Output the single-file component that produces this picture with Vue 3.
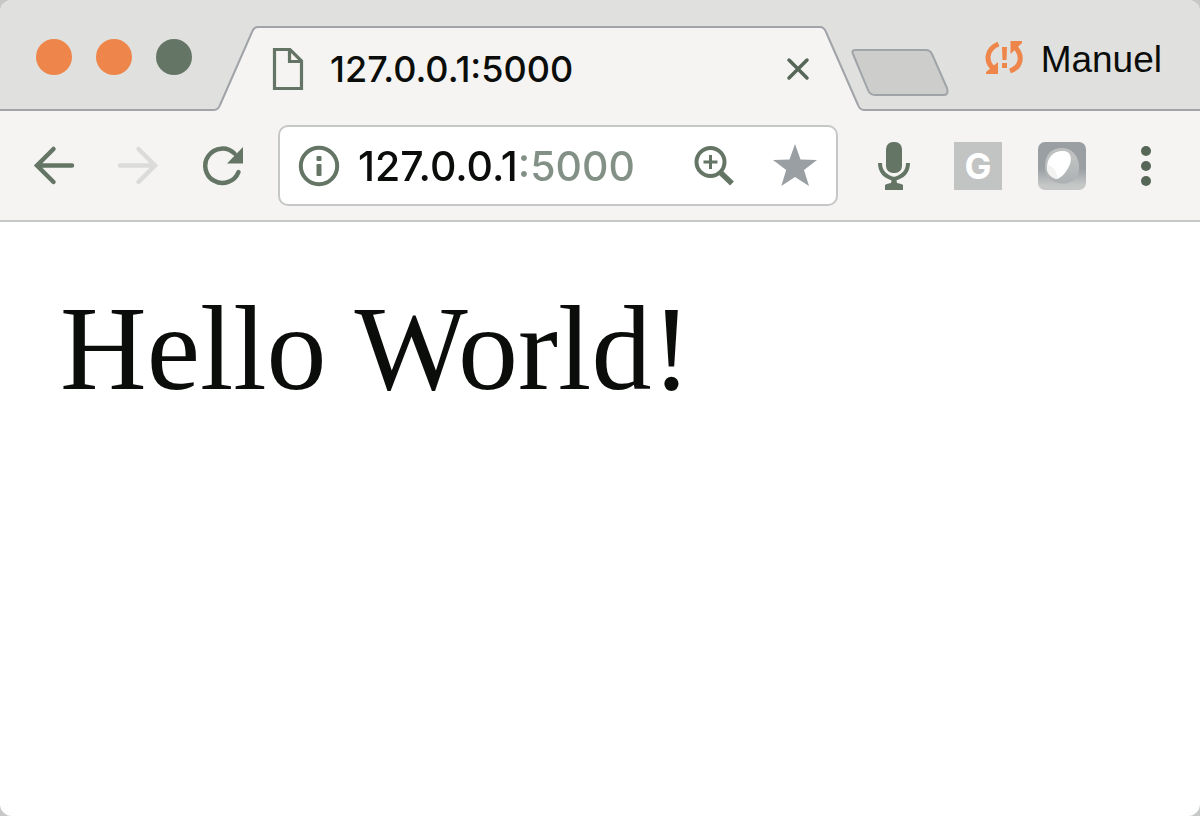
<script setup>
import { ref } from 'vue'

const address = ref('127.0.0.1:5000')
const title = '127.0.0.1:5000'
const profile = 'Manuel'
const lights = [
  { name: 'Close window', tone: 'orange' },
  { name: 'Minimize window', tone: 'orange' },
  { name: 'Zoom window', tone: 'green' },
]
</script>

<template>
  <div class="window">
    <header class="strip">
      <div class="lights">
        <button v-for="l in lights" :key="l.name" :aria-label="l.name" class="light" :class="l.tone"></button>
      </div>

      <div class="tab">
        <svg class="slope" width="44" height="85" viewBox="0 0 44 85" aria-hidden="true">
          <path d="M0 84Q4 84 6 79L38 6Q40 1 44 1V85H0Z" fill="#f5f4f2" />
          <path d="M0 84Q4 84 6 79L38 6Q40 1 44 1" fill="none" stroke="#a0a4a8" stroke-width="2" />
        </svg>
        <div class="tab-body">
          <svg class="page-icon" width="32" height="44" viewBox="0 0 32 44" aria-hidden="true">
            <path d="M2.500 2.500H18L29.500 14V41.500H2.500Z" fill="none" stroke="#647565" stroke-width="3.200" />
            <path d="M17.500 3V14.500H29" fill="none" stroke="#647565" stroke-width="3.200" />
          </svg>
          <span class="title">{{ title }}</span>
          <button class="plain close" aria-label="Close tab">
            <svg width="24" height="24" viewBox="0 0 24 24">
              <path d="M3 3L21 21M21 3L3 21" stroke="#566657" stroke-width="3.500" stroke-linecap="round" />
            </svg>
          </button>
        </div>
        <svg class="slope" width="44" height="85" viewBox="0 0 44 85" aria-hidden="true">
          <path d="M0 1Q4 1 6 6L38 79Q40 84 44 84V85H0Z" fill="#f5f4f2" />
          <path d="M0 1Q4 1 6 6L38 79Q40 84 44 84" fill="none" stroke="#a0a4a8" stroke-width="2" />
        </svg>
      </div>

      <button class="plain new-tab" aria-label="New tab">
        <svg width="100" height="50" viewBox="0 0 100 50">
          <path d="M5 2H76Q80 2 82 6L97 40Q99 47 94 47H25Q20 47 18 42L3 6Q1 2 5 2Z" fill="#cdcdcc" stroke="#a0a4a8" stroke-width="2" />
        </svg>
      </button>

      <button class="plain profile">
        <svg width="40" height="44" viewBox="0 0 40 44" aria-hidden="true">
          <g fill="none" stroke="#ee854a" stroke-width="5">
            <path d="M13.500 6C1 11 0 24 9 31" />
            <path d="M25 33C37 29 38 17 30 9" />
          </g>
          <path d="M1 36V34L13 24V36Z" fill="#ee854a" />
          <path d="M25.500 3H37V5L25.500 16Z" fill="#ee854a" />
          <path d="M17 9H22L21.500 22H17.500Z" fill="#ee854a" />
          <rect x="17" y="25" width="5" height="5" fill="#ee854a" />
        </svg>
        <span>{{ profile }}</span>
      </button>
    </header>

    <nav class="toolbar" aria-label="Navigation">
      <div class="tools">
        <button class="plain tool" aria-label="Back">
          <svg width="44" height="44" viewBox="0 0 44 44">
            <path d="M40 21.500H5M21.500 5L5 21.500L21.500 38" fill="none" stroke="#647565" stroke-width="4.500" stroke-linecap="round" />
          </svg>
        </button>
        <button class="plain tool" aria-label="Forward" disabled>
          <svg width="44" height="44" viewBox="0 0 44 44">
            <path d="M4 21.500H39M22.500 5L39 21.500L22.500 38" fill="none" stroke="#dbdbda" stroke-width="4.500" stroke-linecap="round" />
          </svg>
        </button>
        <button class="plain tool" aria-label="Reload">
          <svg width="44" height="44" viewBox="0 0 44 44">
            <path d="M38.500 28A17.200 17.200 0 1 1 34.500 9.500" fill="none" stroke="#647565" stroke-width="4.500" stroke-linecap="round" />
            <path d="M43 3V19.500H27Z" fill="#647565" />
          </svg>
        </button>
      </div>

      <div class="address">
        <button class="plain" aria-label="Site information">
          <svg width="42" height="42" viewBox="0 0 42 42">
            <circle cx="21" cy="21" r="18.200" fill="none" stroke="#647565" stroke-width="4" />
            <rect x="18.500" y="11" width="5" height="5" rx="1" fill="#647565" />
            <rect x="18.500" y="19" width="5" height="12" rx="1" fill="#647565" />
          </svg>
        </button>
        <input v-model="address" class="url" type="text" aria-label="Address" spellcheck="false" />
        <button class="plain" aria-label="Zoom">
          <svg width="42" height="42" viewBox="0 0 42 42">
            <g fill="none" stroke="#647565">
              <circle cx="16.500" cy="17" r="14" stroke-width="4" />
              <path d="M9.500 17H23.500M16.500 10V24" stroke-width="3" />
              <path d="M27 28L38 38.500" stroke-width="5.500" />
            </g>
          </svg>
        </button>
        <button class="plain star" aria-label="Bookmark this page">
          <svg width="46" height="44" viewBox="0 0 46 44">
            <path d="M23 0L28.500 15.500L45 16L32 26L37 42L23 33L9.300 42L14.200 26L1 16L17.500 15.500Z" fill="#999fa3" />
          </svg>
        </button>
      </div>

      <div class="tools">
        <button class="plain tool" aria-label="Voice search">
          <svg width="34" height="50" viewBox="0 0 34 50">
            <rect x="9" y="1" width="16" height="31" rx="7" fill="#647565" />
            <path d="M3 22C3 31 9 36 17 38C25 36 31 31 31 22" fill="none" stroke="#647565" stroke-width="4" />
            <path d="M15 37H19L20 42Q25 43 26 44V49H8V44Q9 43 14 42Z" fill="#647565" />
          </svg>
        </button>
        <button class="plain tool" aria-label="G extension"><span class="g-icon">G</span></button>
        <button class="plain tool" aria-label="Leaf extension">
          <svg width="48" height="48" viewBox="0 0 48 48">
            <defs>
              <linearGradient id="tile" x1="0" y1="0" x2="0" y2="1">
                <stop offset="0.550" stop-color="#999fa3" />
                <stop offset="0.900" stop-color="#c6c7c7" />
              </linearGradient>
              <linearGradient id="shade" x1="0" y1="0" x2="0" y2="1">
                <stop offset="0.300" stop-color="#bfc1c1" />
                <stop offset="1" stop-color="#acb0b2" />
              </linearGradient>
            </defs>
            <rect width="48" height="48" rx="7" fill="url(#tile)" />
            <path d="M7 24C7 12 14 6 24 6C36 6 42 17 41 28C39 40 29 43 20 41C11 39 7 32 7 24Z" fill="url(#shade)" />
            <path d="M9 24C10 14 17 8 26 9C33 10 34 16 32 22C29 30 23 36 19 37C13 36 8 31 9 24Z" fill="#fff" />
            <path d="M9 23C14 23 19 29 20 37C14 37 8 31 9 23Z" fill="#f2f2f0" />
          </svg>
        </button>
        <button class="plain tool" aria-label="Menu">
          <svg width="12" height="40" viewBox="0 0 12 40" fill="#566657">
            <circle cx="6" cy="5" r="5" />
            <circle cx="6" cy="20" r="5" />
            <circle cx="6" cy="35" r="5" />
          </svg>
        </button>
      </div>
    </nav>

    <main class="page">
      <p>Hello World!</p>
    </main>
  </div>
</template>

<style>
body {
  background: #c6c7c7;
}
</style>

<style scoped>
.window {
  display: flex;
  flex-direction: column;
  min-height: 100vh;
  overflow: hidden;
  border-radius: 12px;
  background: #fff;
  color: #0b0d0b;
}

.plain {
  display: flex;
  align-items: center;
  justify-content: center;
  flex: none;
  padding: 0;
  border: 0;
  background: none;
  color: inherit;
}

.strip {
  display: flex;
  align-items: flex-end;
  height: 111px;
  background: linear-gradient(#a0a4a8, #a0a4a8) bottom / 100% 2px no-repeat #e0e0de;
}

.lights {
  display: flex;
  align-self: flex-start;
  gap: 24px;
  padding: 39px 22px 0 36px;
}

.light {
  width: 36px;
  height: 36px;
  padding: 0;
  border: 0;
  border-radius: 50%;
}

.orange {
  background: #ee854a;
}

.green {
  background: #647565;
}

.tab {
  display: flex;
  flex: 0 1 650px;
  min-width: 0;
}

.slope {
  flex: none;
}

.tab-body {
  display: flex;
  align-items: center;
  flex: 1;
  min-width: 0;
  padding: 0 12px 2px 14px;
  border-top: 2px solid #a0a4a8;
  background: #f5f4f2;
}

.title {
  flex: 1;
  min-width: 0;
  margin-left: 26px;
  overflow: hidden;
  white-space: nowrap;
  font: 500 36px/44px Inter, sans-serif;
}

.close {
  margin-right: -2px;
}

.new-tab {
  align-self: flex-start;
  margin-top: 48px;
  margin-left: -14px;
}

.profile {
  align-self: flex-start;
  gap: 16px;
  margin: 38px 38px 0 auto;
  font: 37px/44px "Liberation Sans", Arial, sans-serif;
}

.toolbar {
  display: flex;
  align-items: center;
  gap: 14px;
  padding: 14px 12px;
  border-bottom: 2px solid #c6c7c7;
  background: #f5f4f2;
}

.tools {
  display: flex;
  flex: none;
}

.tool {
  width: 84px;
  height: 50px;
}

.address {
  display: flex;
  align-items: center;
  flex: 1;
  min-width: 0;
  height: 77px;
  padding: 0 18px;
  border: 2px solid #c6c7c7;
  border-radius: 10px;
  background: #fff;
}

.url {
  flex: 1;
  min-width: 0;
  margin: 0 12px 0 18px;
  padding: 0;
  border: 0;
  outline: 0;
  background: linear-gradient(90deg, #0b0d0b 159px, #829085 159px);
  background-clip: text;
  color: transparent;
  caret-color: #0b0d0b;
  font: 500 41px/54px Inter, sans-serif;
}

.star {
  margin-left: 36px;
}

.g-icon {
  width: 48px;
  height: 48px;
  background: #c2c3c3;
  color: #fff;
  font: bold 36px/48px Inter, sans-serif;
}

.page {
  flex: 1;
  padding: 58px 60px;
}

.page p {
  margin: 0;
  font: 120px/138px "Liberation Serif", "Times New Roman", serif;
}
</style>
